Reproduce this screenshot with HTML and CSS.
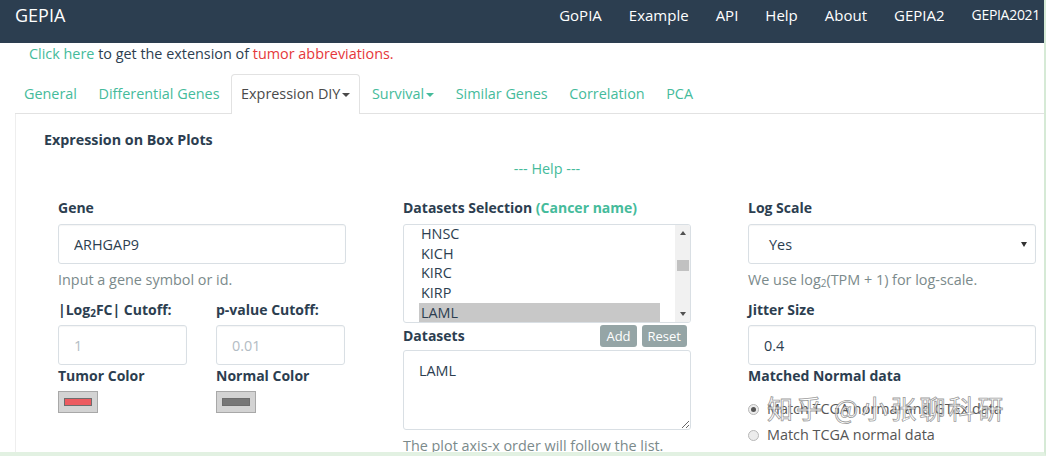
FILE: index.html
```html
<!DOCTYPE html>
<html lang="en">
<head>
<meta charset="utf-8">
<title>GEPIA - Expression DIY</title>
<link rel="stylesheet" href="styles.css">
</head>
<body>
<div class="page">
  <header class="nav">
    <div class="brand">GEPIA</div>
    <nav class="nav-links">
      <a>GoPIA</a><a>Example</a><a>API</a><a>Help</a><a>About</a><a>GEPIA2</a><a class="last">GEPIA2021</a>
    </nav>
  </header>

  <p class="notice"><a class="green">Click here</a> to get the extension of <a class="red">tumor abbreviations.</a></p>

  <ul class="tabs">
    <li class="tab first">General</li>
    <li class="tab">Differential Genes</li>
    <li class="tab active">Expression DIY<span class="caret"></span></li>
    <li class="tab">Survival<span class="caret"></span></li>
    <li class="tab">Similar Genes</li>
    <li class="tab">Correlation</li>
    <li class="tab">PCA</li>
  </ul>

  <section class="panel">
    <h4 class="panel-title">Expression on Box Plots</h4>
    <div class="help">--- Help ---</div>
    <div class="cols">
      <div class="col">
        <div class="label">Gene</div>
        <input class="field" value="ARHGAP9" readonly>
        <div class="hint">Input a gene symbol or id.</div>
        <div class="sub">
          <div>
            <div class="label">|Log<sub>2</sub>FC| Cutoff:</div>
            <input class="field small" placeholder="1" readonly>
            <div class="label tight">Tumor Color</div>
            <div class="swatch"><span class="swatch-bar tumor"></span></div>
          </div>
          <div>
            <div class="label">p-value Cutoff:</div>
            <input class="field small" placeholder="0.01" readonly>
            <div class="label tight">Normal Color</div>
            <div class="swatch"><span class="swatch-bar normal"></span></div>
          </div>
        </div>
      </div>

      <div class="col">
        <div class="label">Datasets Selection <span class="green">(Cancer name)</span></div>
        <div class="listbox">
          <div class="options">
            <div class="opt">HNSC</div>
            <div class="opt">KICH</div>
            <div class="opt">KIRC</div>
            <div class="opt">KIRP</div>
            <div class="opt selected">LAML</div>
          </div>
          <div class="scrollbar">
            <span class="arrow up"></span>
            <span class="track"><span class="thumb"></span></span>
            <span class="arrow down"></span>
          </div>
        </div>
        <div class="ds-row">
          <div class="label">Datasets</div>
          <div class="btns"><button class="btn">Add</button><button class="btn">Reset</button></div>
        </div>
        <textarea class="area" readonly>LAML</textarea>
        <div class="hint">The plot axis-x order will follow the list.</div>
      </div>

      <div class="col">
        <div class="label">Log Scale</div>
        <div class="field select"><span>Yes</span><span class="sel-arrow"></span></div>
        <div class="hint">We use log<sub>2</sub>(TPM + 1) for log-scale.</div>
        <div class="label gap10">Jitter Size</div>
        <input class="field small" value="0.4" readonly>
        <div class="label tight">Matched Normal data</div>
        <div class="radios">
          <label class="radio"><span class="dot checked"></span>Match TCGA normal and GTEx data</label>
          <label class="radio"><span class="dot"></span>Match TCGA normal data</label>
          <span class="watermark">知乎 @小张聊科研</span>
        </div>
      </div>
    </div>
  </section>
</div>
</body>
</html>
```

FILE: styles.css
```css
body {
  margin: 0;
  font-family: "Open Sans", "Noto Sans", "Noto Sans CJK SC", sans-serif;
  font-size: 14.4px;
  color: #2c3e50;
  background: #fff;
}

.page {
  width: 1044px;
  height: 452px;
  border-right: 2px solid #d6ead6;
  border-bottom: 4px solid #e2f1e2;
  overflow: hidden;
  background: #fff;
}

.nav {
  height: 43px;
  box-sizing: border-box;
  padding-top: 4px;
  background: #2c3e50;
  color: #fff;
  display: flex;
  align-items: flex-start;
}

.brand {
  margin-left: 15px;
  font-size: 18px;
  line-height: 22px;
}

.nav-links {
  margin-left: auto;
  margin-right: 4px;
  display: flex;
  gap: 27px;
  font-size: 15px;
  line-height: 22px;
  white-space: nowrap;
}

.nav-links .last {
  font-size: 14px;
  letter-spacing: -0.3px;
}

.notice {
  margin: 1px 0 10px 29px;
  line-height: 20px;
  color: #2c3e50;
}

.green { color: #45bb9b; }
.red { color: #e5383b; }

.tabs {
  list-style: none;
  margin: 0 0 0 15px;
  padding: 0;
  height: 39px;
  display: flex;
  border-bottom: 1px solid #e2e2e2;
}

.tab {
  margin-right: 1.5px;
  padding: 0 9px;
  border: 1px solid transparent;
  border-bottom: none;
  border-radius: 4px 4px 0 0;
  line-height: 38px;
  color: #45bb9b;
  white-space: nowrap;
}

.tab.first { margin-left: -1px; }

.tab.active {
  border-color: #e2e2e2;
  background: #fff;
  color: #4a4a4a;
  height: 39px;
}

.caret {
  display: inline-block;
  width: 0;
  height: 0;
  margin-left: 2px;
  vertical-align: middle;
  border-top: 4px solid currentColor;
  border-left: 4px solid transparent;
  border-right: 4px solid transparent;
}

.panel {
  margin-left: 15px;
  border-left: 1px solid #eeeeee;
  padding: 15px 0 0 28px;
  height: 400px;
}

.panel-title {
  margin: 1px 0 0;
  font-size: 14.3px;
  font-weight: 700;
  line-height: 20px;
  color: #2c3e50;
}

.help {
  margin: 9px 0 0 14px;
  width: 978px;
  text-align: center;
  line-height: 20px;
  color: #45bb9b;
}

.cols {
  margin: 19px 0 0 14px;
  display: grid;
  grid-template-columns: repeat(3, 288px);
  column-gap: 57px;
}

.col {
  display: flex;
  flex-direction: column;
}

.label {
  font-size: 14px;
  font-weight: 700;
  line-height: 20px;
  color: #2c3e50;
  white-space: nowrap;
}

.label.tight { margin-top: 1px; }
.label.gap10 { margin-top: 10px; }

sub {
  font-size: 10px;
  line-height: 0;
  vertical-align: -2px;
}

.field {
  display: flex;
  align-items: center;
  width: 100%;
  height: 40px;
  margin: 6px 0 0;
  padding: 0 15px;
  box-sizing: border-box;
  border: 1px solid #d9dfe4;
  border-radius: 3px;
  box-shadow: inset 0 1px 1px rgba(0, 0, 0, 0.04);
  background: #fff;
  font: inherit;
  color: #2c3e50;
  outline: none;
}

.field.small { margin-top: 5px; }

.field::placeholder { color: #b3bcc4; }

.select {
  justify-content: space-between;
  padding: 0 8px 0 20px;
}

.sel-arrow {
  width: 0;
  height: 0;
  border-top: 5px solid #333;
  border-left: 3px solid transparent;
  border-right: 3px solid transparent;
}

.hint {
  margin-top: 6px;
  line-height: 20px;
  color: #7b8a8b;
  white-space: nowrap;
}

.sub {
  margin-top: 10px;
  display: grid;
  grid-template-columns: 129px 129px;
  column-gap: 29px;
}

.swatch {
  margin-top: 5px;
  width: 40px;
  height: 22px;
  box-sizing: border-box;
  border: 1px solid #a8a8a8;
  background: #d3d3d3;
  display: flex;
  align-items: center;
  justify-content: center;
}

.swatch-bar {
  width: 28px;
  height: 8px;
  box-sizing: border-box;
  border: 1px solid #6d6d6d;
}

.swatch-bar.tumor { background: #ec5b60; }
.swatch-bar.normal { background: #777; }

.listbox {
  margin-top: 6px;
  height: 99px;
  box-sizing: border-box;
  border: 1px solid #d9dfe4;
  border-radius: 3px;
  display: flex;
  overflow: hidden;
}

.options {
  flex: 1;
  padding: 0 15px;
  margin-top: -1px;
}

.opt {
  line-height: 19.7px;
  padding-left: 2px;
  color: #2c3e50;
}

.opt.selected { background: #c8c8c8; }

.scrollbar {
  width: 15px;
  background: #f1f1f1;
  display: flex;
  flex-direction: column;
  align-items: center;
}

.arrow {
  width: 0;
  height: 0;
  margin: 6px 0;
  border-left: 3px solid transparent;
  border-right: 3px solid transparent;
}

.arrow.up { border-bottom: 4px solid #505050; }
.arrow.down { border-top: 4px solid #505050; }

.track {
  flex: 1;
  width: 100%;
  display: flex;
  justify-content: center;
}

.thumb {
  margin-top: 19px;
  width: 12px;
  height: 11px;
  background: #c1c1c1;
}

.ds-row {
  margin-top: 2px;
  height: 22px;
  display: flex;
  align-items: center;
  justify-content: space-between;
}

.btns {
  display: flex;
  gap: 5px;
  margin-right: 4px;
}

.btn {
  height: 22px;
  padding: 0 6px;
  border: none;
  border-radius: 3px;
  background: #95a5a6;
  color: #fff;
  font-family: inherit;
  font-size: 13px;
  line-height: 22px;
}

.area {
  margin-top: 3px;
  width: 100%;
  height: 80px;
  box-sizing: border-box;
  padding: 10px 15px;
  border: 1px solid #d9dfe4;
  border-radius: 3px;
  font: inherit;
  line-height: 20px;
  color: #2c3e50;
  outline: none;
}

.radios {
  position: relative;
  margin-top: 13px;
  display: flex;
  flex-direction: column;
  gap: 6px;
}

.radio {
  display: flex;
  align-items: center;
  line-height: 20px;
  color: #555;
  white-space: nowrap;
}

.dot {
  width: 11px;
  height: 11px;
  margin-right: 8px;
  box-sizing: border-box;
  border: 1px solid #b8b8b8;
  border-radius: 50%;
  background: #ececec;
  display: flex;
  align-items: center;
  justify-content: center;
}

.dot.checked::before {
  content: "";
  width: 5px;
  height: 5px;
  border-radius: 50%;
  background: #555;
}

.watermark {
  position: absolute;
  left: 19px;
  top: -6px;
  font-family: "Noto Sans CJK SC", sans-serif;
  font-size: 26px;
  line-height: 30px;
  letter-spacing: 3px;
  color: rgba(255, 255, 255, 0.75);
  -webkit-text-stroke: 0.8px rgba(110, 110, 110, 0.7);
  white-space: nowrap;
}
```
